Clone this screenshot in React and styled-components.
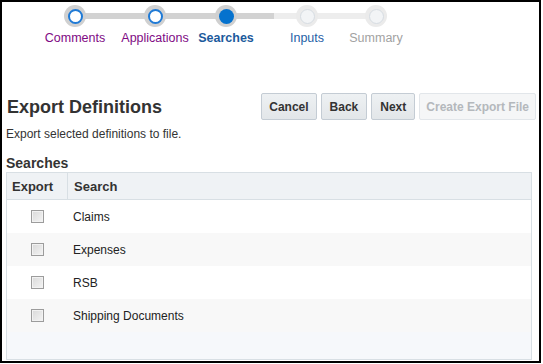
import React from "react";
import styled, { createGlobalStyle, css } from "styled-components";

const GlobalStyle = createGlobalStyle`
  html, body {
    margin: 0;
    padding: 0;
    background: #ffffff;
  }
  body {
    font-family: "Liberation Sans", Arial, sans-serif;
    color: #333333;
  }
`;

const Frame = styled.div`
  box-sizing: border-box;
  width: 541px;
  height: 363px;
  border: 2px solid #000000;
  overflow: hidden;
  background: #ffffff;
  display: flex;
  flex-direction: column;
`;

/* ---- train (stepper) ---- */

const Train = styled.div`
  position: relative;
  display: flex;
  padding: 3px 0 0 33px;
  height: 43px;
`;

const Track = styled.div`
  position: absolute;
  left: 73px;
  top: 11px;
  width: 301px;
  height: 6px;
  background: linear-gradient(
    to right,
    #d2d2d2 0,
    #d2d2d2 199px,
    #ededed 199px,
    #ededed 100%
  );
`;

const Step = styled.div`
  width: ${(p) => p.$w}px;
  display: flex;
  flex-direction: column;
  align-items: center;
  position: relative;
  z-index: 1;
`;

const Ring = styled.div`
  box-sizing: border-box;
  width: 22px;
  height: 22px;
  border-radius: 50%;
  background: ${(p) => (p.$state === "todo" ? "#ebebeb" : "#d0d0d0")};
  display: flex;
  align-items: center;
  justify-content: center;
`;

const Dot = styled.div`
  box-sizing: border-box;
  width: 15px;
  height: 15px;
  border-radius: 50%;
  ${(p) =>
    p.$state === "done" &&
    css`
      background: #ffffff;
      border: 2px solid #1f7ad6;
    `}
  ${(p) =>
    p.$state === "current" &&
    css`
      background: #0572ce;
    `}
  ${(p) =>
    p.$state === "todo" &&
    css`
      background: #f2f4f6;
      border: 1px solid #d6dce2;
    `}
`;

const stepColors = {
  done: "#800a84",
  current: "#1c5a9c",
  next: "#1f5fa6",
  todo: "#a2a2a2",
};

const StepLabel = styled.div`
  margin-top: 4px;
  font-size: 12.5px;
  line-height: 14px;
  white-space: nowrap;
  color: ${(p) => stepColors[p.$tone]};
  font-weight: ${(p) => (p.$tone === "current" ? "bold" : "normal")};
`;

/* ---- header ---- */

const Content = styled.div`
  flex: 1;
  display: flex;
  flex-direction: column;
  padding: 0 7px 0 4px;
`;

const HeaderRow = styled.div`
  display: flex;
  align-items: center;
  justify-content: space-between;
  margin-top: 45px;
  height: 27px;
`;

const Title = styled.h1`
  margin: 1px 0 0 1px;
  font-size: 18px;
  font-weight: bold;
  color: #333333;
`;

const Buttons = styled.div`
  display: flex;
  gap: 4px;
  margin-right: -4px;
`;

const Button = styled.button`
  box-sizing: border-box;
  height: 27px;
  padding: 0 ${(p) => p.$pad || 7}px;
  font-family: "Liberation Sans", Arial, sans-serif;
  font-size: 12px;
  font-weight: bold;
  border-radius: 2px;
  color: #333333;
  border: 1px solid #c4ccd4;
  background: linear-gradient(#eef1f3, #e2e6e9);
  cursor: pointer;

  &:disabled {
    color: #b4b8bc;
    border-color: #e2e6ea;
    background: #f5f6f7;
    cursor: default;
  }
`;

const Description = styled.p`
  margin: 6px 0 0;
  font-size: 12px;
  line-height: 16px;
  color: #333333;
`;

const SectionTitle = styled.h2`
  margin: 13px 0 0;
  font-size: 14px;
  line-height: 16px;
  font-weight: bold;
  color: #333333;
`;

/* ---- table ---- */

const Table = styled.div`
  box-sizing: border-box;
  margin-top: 1px;
  height: 188px;
  border: 1px solid #d8dfe4;
  background: #f6f8fb;
  display: flex;
  flex-direction: column;
`;

const Columns = "60px 1fr";

const HeadRow = styled.div`
  display: grid;
  grid-template-columns: ${Columns};
  height: 26px;
  background: #eff2f5;
  border-bottom: 1px solid #d8dfe4;
`;

const HeadCell = styled.div`
  display: flex;
  align-items: center;
  padding-left: 5px;
  font-size: 13px;
  font-weight: bold;
  color: #333333;
  & + & {
    border-left: 1px solid #d8dfe4;
    padding-left: 6px;
  }
`;

const Row = styled.div`
  display: grid;
  grid-template-columns: ${Columns};
  height: 33px;
  background: ${(p) => (p.$alt ? "#f8f8f8" : "#ffffff")};
`;

const CheckCell = styled.div`
  display: flex;
  align-items: center;
  justify-content: center;
`;

const Checkbox = styled.span`
  box-sizing: border-box;
  display: block;
  width: 13px;
  height: 13px;
  border: 1px solid #9c9c9c;
  background: linear-gradient(135deg, #d9d9d9, #f4f4f4);
  box-shadow: inset 0 0 0 1px #f2f2f2;
`;

const NameCell = styled.div`
  display: flex;
  align-items: center;
  padding-left: 6px;
  font-size: 12px;
  color: #222222;
`;

const steps = [
  { label: "Comments", w: 80, state: "done", tone: "done" },
  { label: "Applications", w: 80, state: "done", tone: "done" },
  { label: "Searches", w: 62, state: "current", tone: "current" },
  { label: "Inputs", w: 100, state: "todo", tone: "next" },
  { label: "Summary", w: 38, state: "todo", tone: "todo" },
];

const searches = ["Claims", "Expenses", "RSB", "Shipping Documents"];

export default function App() {
  return (
    <>
      <GlobalStyle />
      <Frame>
        <Train>
          <Track />
          {steps.map((s) => (
            <Step key={s.label} $w={s.w}>
              <Ring $state={s.state}>
                <Dot $state={s.state} />
              </Ring>
              <StepLabel $tone={s.tone}>{s.label}</StepLabel>
            </Step>
          ))}
        </Train>
        <Content>
          <HeaderRow>
            <Title>Export Definitions</Title>
            <Buttons>
              <Button $pad={7}>Cancel</Button>
              <Button $pad={8}>Back</Button>
              <Button $pad={8}>Next</Button>
              <Button disabled $pad={6}>
                Create Export File
              </Button>
            </Buttons>
          </HeaderRow>
          <Description>Export selected definitions to file.</Description>
          <SectionTitle>Searches</SectionTitle>
          <Table>
            <HeadRow>
              <HeadCell>Export</HeadCell>
              <HeadCell>Search</HeadCell>
            </HeadRow>
            {searches.map((name, i) => (
              <Row key={name} $alt={i % 2 === 1}>
                <CheckCell>
                  <Checkbox />
                </CheckCell>
                <NameCell>{name}</NameCell>
              </Row>
            ))}
          </Table>
        </Content>
      </Frame>
    </>
  );
}
